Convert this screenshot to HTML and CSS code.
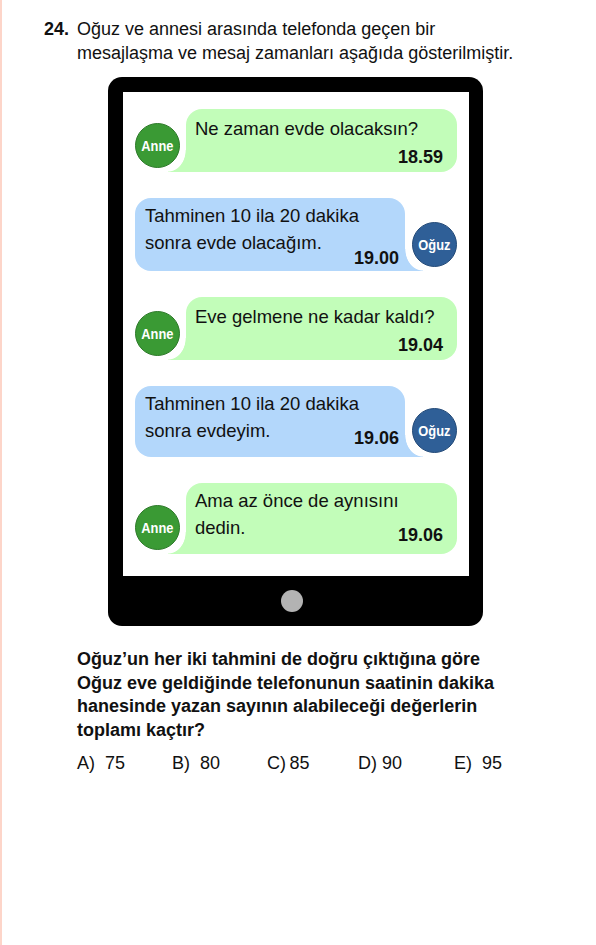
FILE: index.html
```html
<!DOCTYPE html>
<html lang="tr">
<head>
<meta charset="utf-8">
<title>Soru 24</title>
<link rel="stylesheet" href="styles.css">
</head>
<body>
<div class="page">
  <div class="head">
    <div class="num">24.</div>
    <div class="stem">Oğuz ve annesi arasında telefonda geçen bir<br>mesajlaşma ve mesaj zamanları aşağıda gösterilmiştir.</div>
  </div>

  <div class="phone">
    <div class="screen">
      <div class="row in">
        <div class="avatar anne"><span>Anne</span></div>
        <div class="bubble green single">
          <div class="msg">Ne zaman evde olacaksın?</div>
          <div class="time">18.59</div>
        </div>
      </div>
      <div class="row out">
        <div class="bubble blue double low">
          <div class="msg">Tahminen 10 ila 20 dakika<br>sonra evde olacağım.</div>
          <div class="time">19.00</div>
        </div>
        <div class="avatar oguz"><span>Oğuz</span></div>
      </div>
      <div class="row in">
        <div class="avatar anne"><span>Anne</span></div>
        <div class="bubble green single">
          <div class="msg">Eve gelmene ne kadar kaldı?</div>
          <div class="time">19.04</div>
        </div>
      </div>
      <div class="row out">
        <div class="bubble blue double">
          <div class="msg">Tahminen 10 ila 20 dakika<br>sonra evdeyim.</div>
          <div class="time">19.06</div>
        </div>
        <div class="avatar oguz"><span>Oğuz</span></div>
      </div>
      <div class="row in">
        <div class="avatar anne"><span>Anne</span></div>
        <div class="bubble green double">
          <div class="msg">Ama az önce de aynısını<br>dedin.</div>
          <div class="time">19.06</div>
        </div>
      </div>
    </div>
    <div class="home"><div class="button"></div></div>
  </div>

  <div class="question">Oğuz’un her iki tahmini de doğru çıktığına göre<br>Oğuz eve geldiğinde telefonunun saatinin dakika<br>hanesinde yazan sayının alabileceği değerlerin<br>toplamı kaçtır?</div>

  <div class="answers">
    <div class="opt">A)&nbsp; 75</div>
    <div class="opt">B)&nbsp; 80</div>
    <div class="opt">C)&thinsp;85</div>
    <div class="opt">D) 90</div>
    <div class="opt">E)&nbsp; 95</div>
  </div>
</div>
</body>
</html>
```

FILE: styles.css
```css
html, body {
  margin: 0;
  padding: 0;
  background: #ffffff;
}

body {
  font-family: "Liberation Sans", Arial, sans-serif;
  color: #111111;
}

.page {
  min-height: 945px;
  box-sizing: border-box;
  border-left: 2px solid #fdd5c9;
  padding: 17px 0 0 42px;
}

.head {
  display: flex;
  font-size: 18px;
  line-height: 24px;
}

.num {
  width: 33px;
  font-weight: bold;
  flex: none;
}

.phone {
  margin: 12px 0 0 64px;
  width: 375px;
  box-sizing: border-box;
  background: #000000;
  border-radius: 14px;
  padding: 15px 14px 0 15px;
}

.screen {
  background: #ffffff;
  height: 484px;
  box-sizing: border-box;
  padding: 17px 12px 0;
  display: flex;
  flex-direction: column;
  gap: 26px;
}

.row {
  display: flex;
  align-items: flex-end;
}

.row.in { gap: 6px; }
.row.out { gap: 7px; }

.avatar {
  width: 45px;
  height: 45px;
  flex: none;
  box-sizing: border-box;
  border-radius: 50%;
  display: flex;
  align-items: center;
  justify-content: center;
  margin-bottom: 4px;
  color: #ffffff;
  font-weight: bold;
  font-size: 15.5px;
}

.avatar span {
  display: inline-block;
  transform: scaleX(0.83);
}

.anne {
  background: #3a9a34;
  border: 1px solid #2d7a29;
}

.oguz {
  background: #2f5f97;
  border: 1px solid #234a78;
}

.bubble {
  position: relative;
  flex: none;
  box-sizing: border-box;
  border-radius: 16px;
  font-size: 18.5px;
}

.green {
  width: 271px;
  background: #c2fdb9;
  border-bottom-left-radius: 0;
  padding-left: 9px;
  padding-right: 14px;
}

.blue {
  width: 270px;
  background: #b3d7fb;
  border-bottom-right-radius: 0;
  padding-left: 10px;
  padding-right: 6px;
}

.green::before {
  content: "";
  position: absolute;
  left: -18px;
  bottom: 0;
  width: 18px;
  height: 22px;
  background: radial-gradient(ellipse 18px 22px at 0 0, rgba(255,255,255,0) 96%, #c2fdb9 100%);
}

.blue::after {
  content: "";
  position: absolute;
  right: -18px;
  bottom: 0;
  width: 18px;
  height: 22px;
  background: radial-gradient(ellipse 18px 22px at 100% 0, rgba(255,255,255,0) 96%, #b3d7fb 100%);
}

.msg {
  line-height: 27px;
}

.time {
  text-align: right;
  font-weight: bold;
  font-size: 18px;
  line-height: 20px;
}

.single {
  padding-top: 6px;
  padding-bottom: 5px;
}

.single .time {
  margin-top: 5px;
}

.double {
  padding-top: 4px;
  padding-bottom: 9px;
}

.double .time {
  margin-top: -16px;
}

.double.low {
  padding-bottom: 3px;
}

.double.low .time {
  margin-top: -8px;
}

.home {
  height: 50px;
  display: flex;
  align-items: center;
  justify-content: center;
  padding-right: 9px;
}

.button {
  width: 22px;
  height: 22px;
  border-radius: 50%;
  background: #b3b3b3;
}

.question {
  margin: 22px 0 0 33px;
  font-size: 18px;
  font-weight: bold;
  line-height: 23.5px;
}

.answers {
  margin: 9px 0 0 33px;
  display: grid;
  grid-template-columns: 95px 95px 91px 96px 60px;
  font-size: 18px;
  line-height: 24px;
}
```
